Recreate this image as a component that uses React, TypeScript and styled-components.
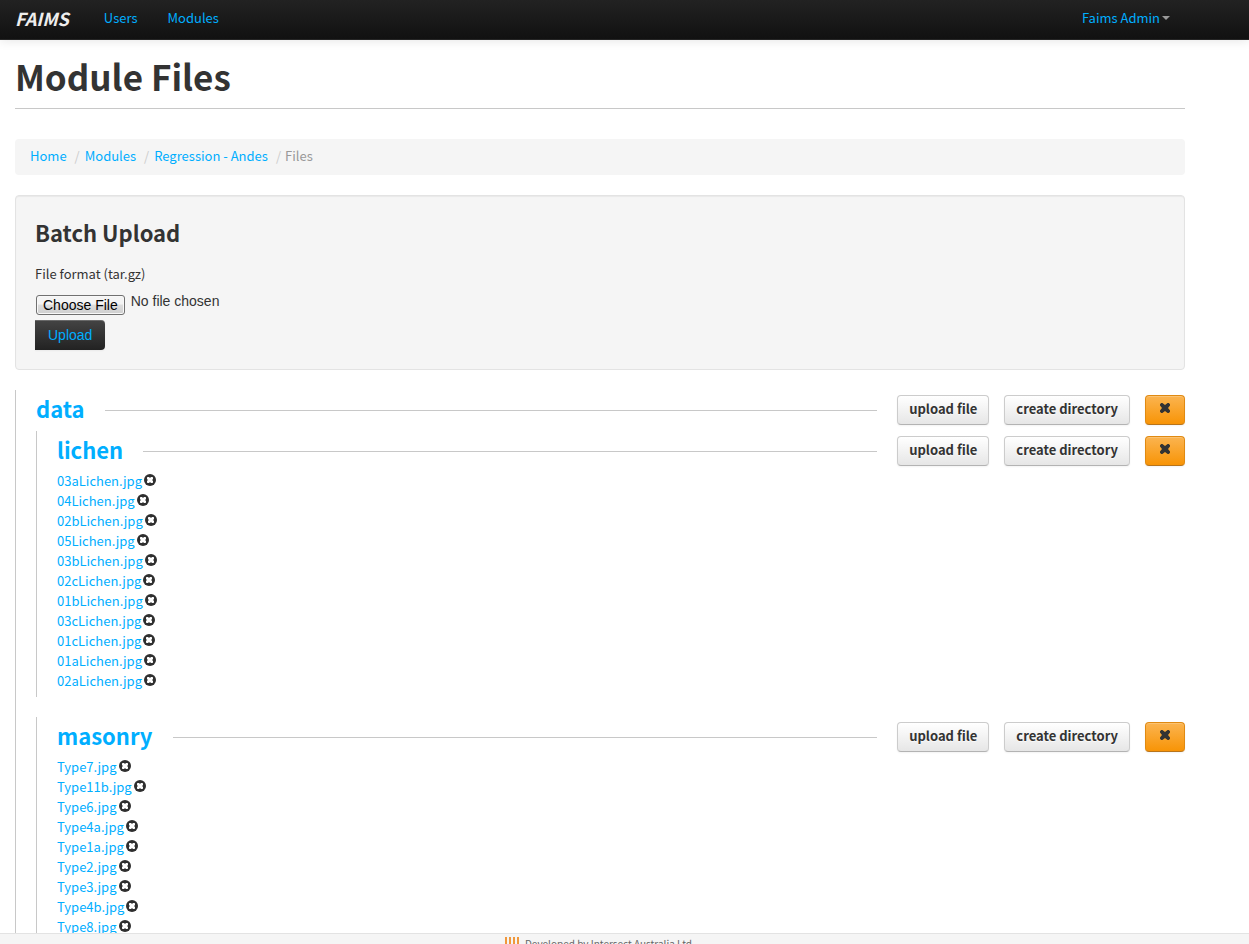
import React from "react";
import styled, { createGlobalStyle } from "styled-components";

const blue = "#00aeff";
const ink = "#333333";
const rule = "#c8c8c8";
const panel = "#f5f5f5";

const GlobalStyle = createGlobalStyle`
  *, *::before, *::after { box-sizing: border-box; }
  body {
    margin: 0;
    background: #ffffff;
    color: ${ink};
    font-family: "Noto Sans CJK SC", "Noto Sans", sans-serif;
    font-size: 13px;
    line-height: 18px;
  }
  h1, h2, ul, ol, p { margin: 0; padding: 0; }
  ul, ol { list-style: none; }
  a { color: ${blue}; text-decoration: none; }
  a:hover { text-decoration: underline; }
`;

const Shell = styled.div`
  display: flex;
  flex-direction: column;
  height: 100vh;
  overflow: hidden;
`;

const Navbar = styled.header`
  flex: none;
  background: linear-gradient(to bottom, #222222, #111111);
  border-bottom: 1px solid #252525;
  box-shadow: 0 1px 10px rgba(0, 0, 0, 0.1);
`;

const NavInner = styled.div`
  display: flex;
  align-items: center;
  max-width: 1200px;
  height: 39px;
  padding: 0 15px;
`;

const Brand = styled.a`
  margin-right: 20px;
  padding-bottom: 4px;
  color: #eeeeee;
  font-size: 18px;
  font-weight: 700;
  font-style: italic;
`;

const NavLinks = styled.nav`
  display: flex;
  flex: 1;
  align-items: center;
`;

const NavLink = styled.a`
  padding: 8px 15px 12px;
`;

const UserMenu = styled.button`
  display: flex;
  align-items: center;
  gap: 2px;
  padding: 8px 15px 12px;
  border: 0;
  background: none;
  color: ${blue};
  font: inherit;
  cursor: pointer;
`;

const Caret = styled.span`
  border-top: 4px solid #999999;
  border-left: 4px solid transparent;
  border-right: 4px solid transparent;
`;

const Main = styled.main`
  flex: 1;
  min-height: 0;
  overflow: hidden;
`;

const Container = styled.div`
  max-width: 1200px;
  padding: 0 15px;
`;

const PageTitle = styled.h1`
  margin-bottom: 30px;
  padding: 16px 0 12px;
  border-bottom: 1px solid ${rule};
  font-size: 35px;
  font-weight: 700;
  line-height: 40px;
`;

const Breadcrumb = styled.ol`
  display: flex;
  margin-bottom: 20px;
  padding: 8px 15px 10px;
  border-radius: 4px;
  background: ${panel};
`;

const Crumb = styled.li`
  color: #999999;

  & + &::before {
    content: "/";
    padding: 0 5px 0 8px;
    color: #cccccc;
  }

  & + &:last-child::before {
    padding-right: 4px;
  }
`;

const Well = styled.form`
  display: flex;
  flex-direction: column;
  align-items: flex-start;
  margin-bottom: 20px;
  padding: 19px;
  border: 1px solid #e3e3e3;
  border-radius: 4px;
  background: ${panel};
  box-shadow: inset 0 1px 1px rgba(0, 0, 0, 0.05);
`;

const WellTitle = styled.h2`
  margin-bottom: 16px;
  font-size: 22px;
  font-weight: 700;
  line-height: 34px;
`;

const FileLabel = styled.label`
  margin-bottom: 7px;
`;

const FileInput = styled.input`
  height: 30px;
  padding: 1px;
  color: ${ink};
  font: 14px / 20px "Liberation Sans", Arial, sans-serif;

  &::file-selector-button {
    height: 20px;
    margin: 4px 6px 0 0;
    padding: 0 6px;
    border: 1px solid #707070;
    border-radius: 3px;
    background: linear-gradient(to bottom, #f4f4f4 0 45%, #dddddd 50%, #cfcfcf);
    box-shadow: inset 0 0 0 1px #f8f8f8;
    color: #000000;
    font: inherit;
    line-height: 18px;
    vertical-align: -4px;
  }
`;

const UploadButton = styled.button`
  padding: 5px 13px;
  border: 0;
  border-radius: 0 4px 4px 0;
  background: linear-gradient(to bottom, #444444, #222222);
  box-shadow: inset 0 1px 0 rgba(255, 255, 255, 0.2), 0 1px 2px rgba(0, 0, 0, 0.05);
  color: ${blue};
  font: 14px / 20px "Liberation Sans", Arial, sans-serif;
  cursor: pointer;
`;

const Directory = styled.section`
  padding-left: 20px;
  border-left: 1px solid ${rule};

  & + & {
    margin-top: 20px;
  }
`;

const DirectoryHead = styled.div`
  display: flex;
  align-items: center;
  height: 41px;
`;

const DirectoryName = styled.h2`
  padding-bottom: 6px;
  font-size: 22px;
  font-weight: 700;
  line-height: 34px;
`;

const Line = styled.span`
  flex: 1;
  height: 1px;
  margin: 0 20px;
  background: ${rule};
`;

const Actions = styled.div`
  display: flex;
  gap: 15px;
  margin-bottom: 1px;
`;

const Button = styled.button<{ $warning?: boolean }>`
  display: flex;
  align-items: flex-start;
  justify-content: center;
  min-width: 40px;
  height: 30px;
  padding: 4px 11px;
  border: 1px solid;
  border-color: ${(p) => (p.$warning ? "#e08a12 #e08a12 #b8741a" : "#cccccc #cccccc #b3b3b3")};
  border-radius: 4px;
  background: ${(p) =>
    p.$warning
      ? "linear-gradient(to bottom, #fbb450, #f89406)"
      : "linear-gradient(to bottom, #ffffff, #e6e6e6)"};
  box-shadow: inset 0 1px 0 rgba(255, 255, 255, 0.2), 0 1px 2px rgba(0, 0, 0, 0.05);
  color: ${ink};
  font: inherit;
  font-weight: 700;
  text-shadow: 0 1px 1px rgba(255, 255, 255, 0.75);
  cursor: pointer;

  svg {
    margin-top: 2px;
  }
`;

const FileList = styled.ul`
  padding-bottom: 5px;
`;

const FileRow = styled.li`
  display: flex;
  align-items: flex-start;
  gap: 2px;
  height: 20px;
`;

const RemoveButton = styled.button`
  display: flex;
  padding: 2px 0;
  border: 0;
  background: none;
  color: #2f2f2f;
  cursor: pointer;
`;

const Footer = styled.footer`
  display: flex;
  flex: none;
  justify-content: center;
  gap: 6px;
  height: 11px;
  padding-right: 52px;
  overflow: hidden;
  border-top: 1px solid #e3e3e3;
  background: ${panel};
  color: #666666;
  font-size: 10px;
  line-height: 20px;

  svg {
    flex: none;
    margin-top: 3px;
  }
`;

const CrossIcon = () => (
  <svg width="12" height="12" viewBox="0 0 12 12" aria-hidden="true">
    <path
      fill="currentColor"
      d="M3.4 1 6 3 8.6 1H9.8L11 2.2V3.4L9 6 11 8.6V9.8L9.8 11H8.6L6 9 3.4 11H2.2L1 9.8V8.6L3 6 1 3.4V2.2L2.2 1Z"
    />
  </svg>
);

const RemoveIcon = () => (
  <svg width="12" height="12" viewBox="0 0 12 12" aria-hidden="true">
    <circle cx="6" cy="6" r="6" fill="currentColor" />
    <path
      fill="#ffffff"
      d="M3.6 3H5L6 3.9 7 3H8.4L9 3.6V5L8.1 6 9 7V8.4L8.4 9H7L6 8.1 5 9H3.6L3 8.4V7L3.9 6 3 5V3.6Z"
    />
  </svg>
);

const BarsLogo = () => (
  <svg width="14" height="14" viewBox="0 0 14 14" aria-hidden="true">
    <path fill="#f0983c" d="M0 0h2v14H0zM4 0h2v14H4zM8 0h2v14H8zM12 0h2v14h-2z" />
  </svg>
);

interface DirectoryData {
  name: string;
  files?: string[];
  children?: DirectoryData[];
}

const tree: DirectoryData = {
  name: "data",
  children: [
    {
      name: "lichen",
      files: [
        "03aLichen.jpg",
        "04Lichen.jpg",
        "02bLichen.jpg",
        "05Lichen.jpg",
        "03bLichen.jpg",
        "02cLichen.jpg",
        "01bLichen.jpg",
        "03cLichen.jpg",
        "01cLichen.jpg",
        "01aLichen.jpg",
        "02aLichen.jpg",
      ],
    },
    {
      name: "masonry",
      files: [
        "Type7.jpg",
        "Type11b.jpg",
        "Type6.jpg",
        "Type4a.jpg",
        "Type1a.jpg",
        "Type2.jpg",
        "Type3.jpg",
        "Type4b.jpg",
        "Type8.jpg",
      ],
    },
  ],
};

const DirectoryNode = ({ name, files, children }: DirectoryData) => (
  <Directory>
    <DirectoryHead>
      <DirectoryName>
        <a href="#">{name}</a>
      </DirectoryName>
      <Line />
      <Actions>
        <Button type="button">upload file</Button>
        <Button type="button">create directory</Button>
        <Button type="button" $warning aria-label={`Delete ${name}`}>
          <CrossIcon />
        </Button>
      </Actions>
    </DirectoryHead>
    {files && (
      <FileList>
        {files.map((file) => (
          <FileRow key={file}>
            <a href="#">{file}</a>
            <RemoveButton type="button" aria-label={`Delete ${file}`}>
              <RemoveIcon />
            </RemoveButton>
          </FileRow>
        ))}
      </FileList>
    )}
    {children?.map((child) => (
      <DirectoryNode key={child.name} {...child} />
    ))}
  </Directory>
);

export default function App() {
  return (
    <Shell>
      <GlobalStyle />
      <Navbar>
        <NavInner>
          <Brand href="#">FAIMS</Brand>
          <NavLinks>
            <NavLink href="#">Users</NavLink>
            <NavLink href="#">Modules</NavLink>
          </NavLinks>
          <UserMenu type="button" aria-haspopup="menu">
            Faims Admin
            <Caret />
          </UserMenu>
        </NavInner>
      </Navbar>
      <Main>
        <Container>
          <PageTitle>Module Files</PageTitle>
          <Breadcrumb>
            <Crumb><a href="#">Home</a></Crumb>
            <Crumb><a href="#">Modules</a></Crumb>
            <Crumb><a href="#">Regression - Andes</a></Crumb>
            <Crumb>Files</Crumb>
          </Breadcrumb>
          <Well onSubmit={(event) => event.preventDefault()}>
            <WellTitle>Batch Upload</WellTitle>
            <FileLabel htmlFor="batch-file">File format (tar.gz)</FileLabel>
            <FileInput id="batch-file" type="file" />
            <UploadButton type="submit">Upload</UploadButton>
          </Well>
          <DirectoryNode {...tree} />
        </Container>
      </Main>
      <Footer>
        <BarsLogo />
        <span>Developed by Intersect Australia Ltd</span>
      </Footer>
    </Shell>
  );
}
